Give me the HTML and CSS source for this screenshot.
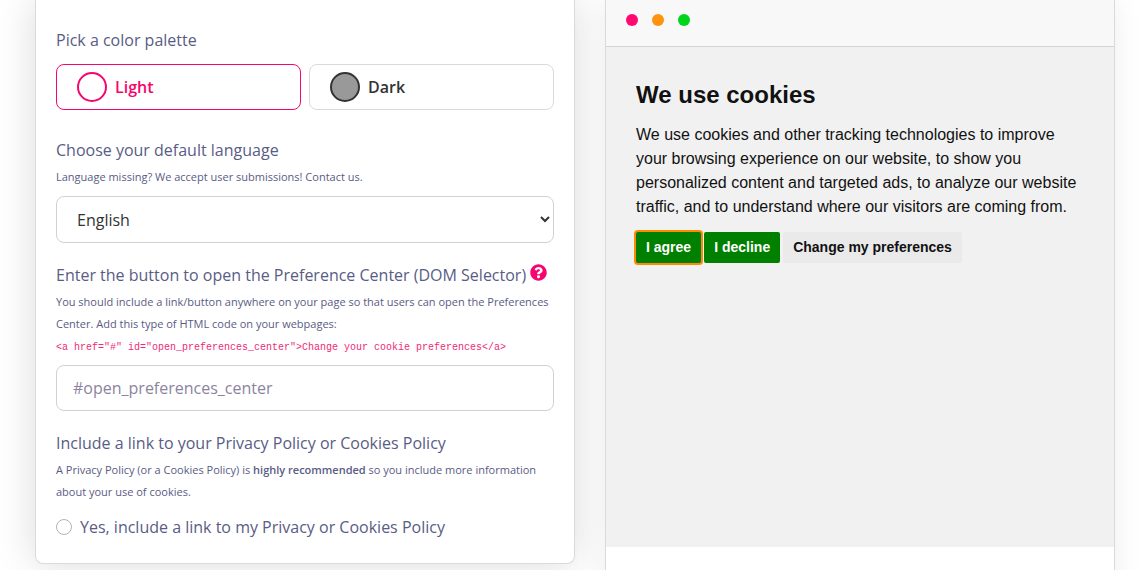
FILE: index.html
```html
<!DOCTYPE html>
<html lang="en">
<head>
<meta charset="utf-8">
<title>Cookie consent settings</title>
<link rel="stylesheet" href="styles.css">
</head>
<body>
<main class="page">
  <form class="card settings">
    <fieldset class="group">
      <legend class="label">Pick a color palette</legend>
      <div class="palettes">
        <button type="button" class="palette palette-light" aria-pressed="true"><span class="swatch"></span>Light</button>
        <button type="button" class="palette palette-dark" aria-pressed="false"><span class="swatch"></span>Dark</button>
      </div>
    </fieldset>
    <div class="group group-language">
      <label class="label" for="language">Choose your default language</label>
      <p class="hint">Language missing? We accept user submissions! Contact us.</p>
      <select class="field select" id="language"><option>English</option></select>
    </div>
    <div class="group group-selector">
      <div class="label-row">
        <label class="label" for="selector">Enter the button to open the Preference Center (DOM Selector)</label>
        <svg class="help" viewBox="0 0 512 512" role="img" aria-label="Help"><path fill="currentColor" d="M504 256c0 136.997-111.043 248-248 248S8 392.997 8 256C8 119.083 119.043 8 256 8s248 111.083 248 248zM262.655 90c-54.497 0-89.255 22.957-116.549 63.758-3.536 5.286-2.353 12.415 2.715 16.258l34.699 26.31c5.205 3.947 12.621 3.008 16.665-2.122 17.864-22.658 30.113-35.797 57.303-35.797 20.429 0 45.698 13.148 45.698 32.958 0 14.976-12.363 22.667-32.534 33.976C247.128 238.528 216 254.941 216 296v4c0 6.627 5.373 12 12 12h56c6.627 0 12-5.373 12-12v-1.333c0-28.462 83.186-29.647 83.186-106.667 0-58.002-60.165-102-116.531-102zM256 338c-25.365 0-46 20.635-46 46 0 25.364 20.635 46 46 46s46-20.636 46-46c0-25.365-20.635-46-46-46z"/></svg>
      </div>
      <p class="hint">You should include a link/button anywhere on your page so that users can open the Preferences Center. Add this type of HTML code on your webpages:</p>
      <code class="snippet">&lt;a href="#" id="open_preferences_center"&gt;Change your cookie preferences&lt;/a&gt;</code>
      <input class="field field-tight" id="selector" type="text" placeholder="#open_preferences_center">
    </div>
    <div class="group group-policy">
      <p class="label">Include a link to your Privacy Policy or Cookies Policy</p>
      <p class="hint">A Privacy Policy (or a Cookies Policy) is <strong>highly recommended</strong> so you include more information about your use of cookies.</p>
      <label class="choice"><input class="radio" type="radio" name="policy">Yes, include a link to my Privacy or Cookies Policy</label>
    </div>
  </form>
  <section class="card preview">
    <div class="titlebar">
      <span class="dot dot-pink"></span>
      <span class="dot dot-orange"></span>
      <span class="dot dot-green"></span>
    </div>
    <div class="notice">
      <h2 class="notice-title">We use cookies</h2>
      <p class="notice-text">We use cookies and other tracking technologies to improve your browsing experience on our website, to show you personalized content and targeted ads, to analyze our website traffic, and to understand where our visitors are coming from.</p>
      <div class="actions">
        <button type="button" class="action action-green action-focused">I agree</button>
        <button type="button" class="action action-green">I decline</button>
        <button type="button" class="action">Change my preferences</button>
      </div>
    </div>
  </section>
</main>
</body>
</html>
```

FILE: styles.css
```css
* { box-sizing: border-box; }

body {
  margin: 0;
  background: #fff;
  color: #595c85;
  font: 16px/24px "Open Sans", sans-serif;
}

p, h2, fieldset { margin: 0; padding: 0; border: 0; }
legend { padding: 0; }
button, input, select { font: inherit; margin: 0; }
strong { font-weight: 600; }

.page {
  display: grid;
  grid-template-columns: 18fr 17fr;
  align-items: start;
  gap: 30px;
  height: 100vh;
  padding: 0 31px 0 35px;
  overflow: hidden;
}

.card {
  background: #fff;
  border: 1px solid #d9dadd;
  border-top: 0;
  border-radius: 0 0 8px 8px;
  box-shadow: 0 0 40px rgba(0, 0, 0, 0.15);
}

.settings {
  display: flex;
  flex-direction: column;
  gap: 20px;
  padding: 28px 20px 24px;
}

.group { min-width: 0; }
.group-language { padding-top: 8px; }
.label { display: block; }

.palettes {
  display: grid;
  grid-template-columns: 1fr 1fr;
  gap: 8px;
  padding-top: 12px;
}

.palette {
  display: flex;
  align-items: center;
  gap: 8px;
  height: 46px;
  padding: 0 20px;
  background: #fff;
  border: 1px solid #d9dadd;
  border-radius: 8px;
  color: #333;
  font-weight: 600;
}

.palette-light { border-color: #f7056e; color: #f7056e; }

.swatch {
  width: 30px;
  height: 30px;
  border: 2px solid currentColor;
  border-radius: 50%;
}

.palette-dark .swatch { background: #999; }

.hint {
  margin-top: 4px;
  font-size: 11px;
  line-height: 22px;
}

.field {
  display: block;
  width: 100%;
  height: 46px;
  margin-top: 8px;
  padding: 0 16px;
  background: #fff;
  border: 1px solid #ced2d8;
  border-radius: 8px;
  color: #333;
}

.field-tight { margin-top: 4px; }
.select { height: 47px; padding: 0 0 0 16px; }
.field::placeholder { color: #8c849f; opacity: 1; }

.label-row { display: flex; gap: 4px; }
.help { flex: none; width: 17px; height: 17px; margin-top: 1px; color: #f7056e; }

.snippet {
  display: block;
  color: #f02a78;
  font: 10px/26px "Liberation Mono", monospace;
}

.choice { display: flex; align-items: center; gap: 8px; margin-top: 12px; }

.radio {
  appearance: none;
  width: 16px;
  height: 16px;
  background: #fff;
  border: 1px solid #adb5bd;
  border-radius: 50%;
}

.preview { min-height: 600px; box-shadow: 0 0 30px rgba(0, 0, 0, 0.07); }

.titlebar {
  display: flex;
  gap: 14px;
  padding: 14px 20px 20px;
  background: #f8f8f8;
  border-bottom: 1px solid #d5d5d5;
}

.dot { width: 12px; height: 12px; border-radius: 50%; }
.dot-pink { background: #ff0870; }
.dot-orange { background: #ff930f; }
.dot-green { background: #00d51b; }

.notice {
  min-height: 500px;
  padding: 32px 30px;
  background: #f1f1f1;
  color: #111;
  font-family: "Liberation Sans", sans-serif;
}

.notice-title { font-size: 24px; line-height: 32px; }
.notice-text { margin-top: 12px; }
.actions { display: flex; gap: 3px; margin-top: 13px; }

.action {
  padding: 5px 10px 6px;
  background: #eaeaea;
  border: 0;
  border-radius: 2px;
  color: #111;
  font-size: 14px;
  font-weight: 700;
  line-height: 20px;
}

.action-green { background: green; color: #fff; }
.action-focused { box-shadow: 0 0 0 2px #ff8c00; }
```
